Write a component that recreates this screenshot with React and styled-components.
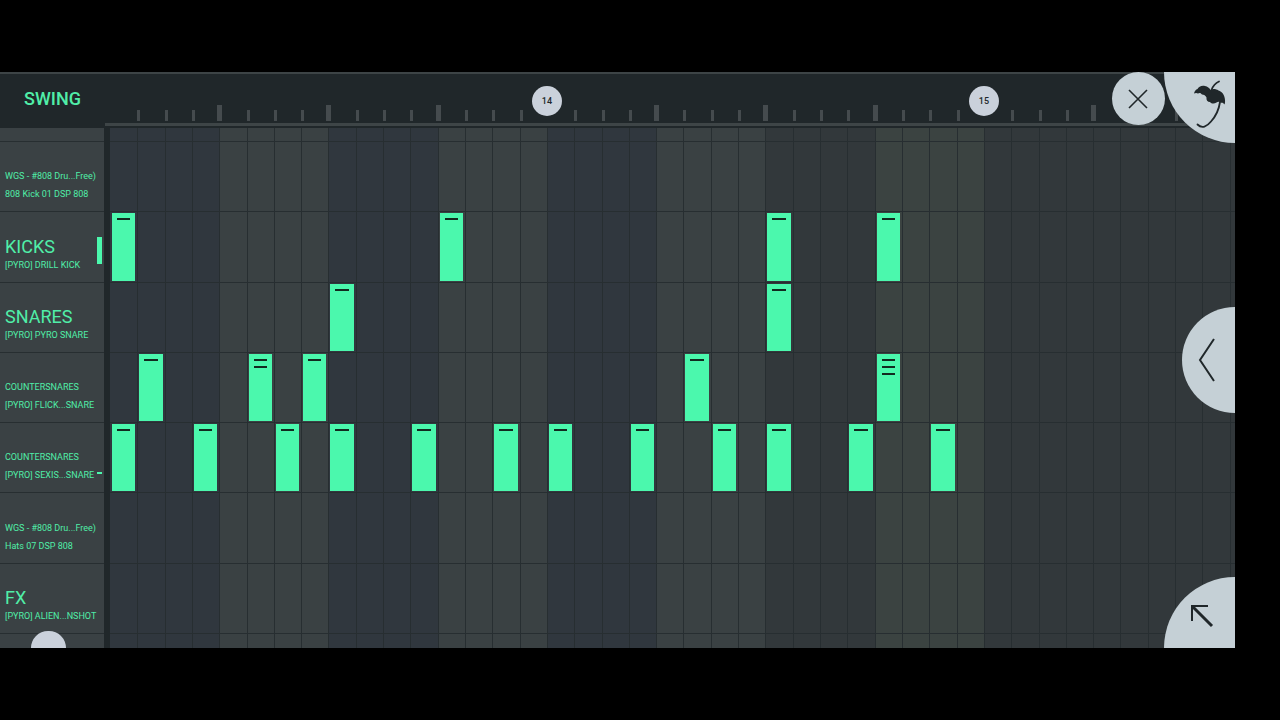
import React from "react";
import styled, { createGlobalStyle } from "styled-components";

const GlobalStyle = createGlobalStyle`
  * {
    box-sizing: border-box;
    margin: 0;
    padding: 0;
    font-family: Roboto, "Liberation Sans", sans-serif;
  }

  body {
    background: #000;
  }

  button {
    border: 0;
    background: none;
    cursor: pointer;
  }
`;

// 41 full steps and a sliver of the next one
const STEP_TRACKS = "repeat(41, minmax(0, 36fr)) minmax(0, 7fr)";
const ROW_TRACKS = "14px repeat(7, minmax(0, 1fr)) 14px";

const Page = styled.div`
  height: 100vh;
  min-height: 480px;
  padding: 72px 45px 72px 0;
`;

const Screen = styled.main`
  position: relative;
  display: flex;
  flex-direction: column;
  height: 100%;
  overflow: hidden;
  background: #20272a;
`;

const Header = styled.header`
  display: flex;
  height: 56px;
  border-top: 2px solid #3d4446;
`;

const SwingButton = styled.button`
  width: 105px;
  padding-bottom: 4px;
  color: #50eea8;
  font-size: 18px;
  font-weight: 500;
  line-height: 48px;
  text-align: center;
`;

const Ruler = styled.div`
  flex: 1;
  display: grid;
  grid-template-columns: ${STEP_TRACKS};
  align-items: end;
  margin-bottom: 2px;
  padding: 0 0 2px 5px;
  border-bottom: 3px solid #3e4547;
`;

const Tick = styled.span`
  grid-row: 1;
  grid-column: ${(props) => props.$step + 1};
  width: ${(props) => (props.$beat ? 5 : 3)}px;
  height: ${(props) => (props.$beat ? 16 : 11)}px;
  margin-left: ${(props) => (props.$beat ? -2 : 0)}px;
  background: #454b4e;
`;

const BarBadge = styled.span`
  grid-row: 1;
  grid-column: ${(props) => props.$step + 1};
  width: 30px;
  height: 30px;
  margin: 0 0 5px -15px;
  border-radius: 50%;
  background: #cad1db;
  color: #20272a;
  font-size: 9px;
  font-weight: 500;
  line-height: 30px;
  text-align: center;
`;

const Body = styled.div`
  flex: 1;
  display: flex;
  gap: 6px;
  min-height: 0;
`;

const Sidebar = styled.ul`
  display: grid;
  grid-template-rows: ${ROW_TRACKS};
  width: 104px;
  background: #3a4144;
  list-style: none;
`;

const ChannelItem = styled.li`
  border-bottom: 1px solid #272e31;
`;

const ChannelButton = styled.button`
  display: flex;
  align-items: flex-end;
  justify-content: space-between;
  width: 100%;
  height: 100%;
  padding: 0 2px 8px 5px;
  color: #50eea8;
  text-align: left;
  white-space: nowrap;
`;

const ChannelText = styled.span`
  width: 92px;
`;

const GroupName = styled.span`
  display: block;
  font-size: ${(props) => (props.$large ? 18 : 9)}px;
  line-height: 18px;
`;

const SampleName = styled.span`
  display: block;
  font-size: 9px;
  line-height: 18px;
`;

const Meter = styled.span`
  width: 5px;
  height: ${(props) => props.$level}px;
  margin-bottom: 10px;
  background: #4bf8ad;
`;

const Grid = styled.div`
  flex: 1;
  display: grid;
  grid-template-columns: ${STEP_TRACKS};
  grid-template-rows: ${ROW_TRACKS};
`;

const StepColumn = styled.span`
  grid-column: ${(props) => props.$step + 1};
  grid-row: 1 / -1;
  border-left: 1px solid #272e31;
  background: ${(props) => props.$color};

  &:first-child {
    border-left: 0;
  }
`;

const RowLine = styled.span`
  grid-column: 1 / -1;
  grid-row: ${(props) => props.$row + 1};
  border-bottom: 1px solid #272e31;
`;

const Note = styled.button`
  grid-column: ${(props) => props.$step + 1};
  grid-row: ${(props) => props.$row + 1};
  display: flex;
  flex-direction: column;
  gap: 5px;
  margin: 1px 2px 2px;
  padding: 5px;
  background: #4bf8ad;
`;

const Mark = styled.span`
  height: 2px;
  background: #122b20;
`;

const RoundButton = styled.button`
  position: absolute;
  display: flex;
  align-items: center;
  justify-content: center;
  background: #c5d0d6;
  color: #20272a;
`;

const CloseButton = styled(RoundButton)`
  top: 0;
  right: 70px;
  width: 53px;
  height: 53px;
  padding-right: 2px;
  border-radius: 50%;
`;

const LogoButton = styled(RoundButton)`
  top: 0;
  right: 0;
  width: 71px;
  height: 71px;
  padding: 0 0 7px 20px;
  border-radius: 0 0 0 100%;
`;

const DrawerButton = styled(RoundButton)`
  top: 50%;
  right: 0;
  width: 53px;
  height: 106px;
  margin-top: -53px;
  padding-right: 4px;
  border-radius: 106px 0 0 106px;
`;

const ExpandButton = styled(RoundButton)`
  right: 0;
  bottom: 0;
  width: 71px;
  height: 71px;
  padding: 6px 0 0 4px;
  border-radius: 100% 0 0 0;
`;

const ScrollKnob = styled(RoundButton)`
  bottom: 0;
  left: 31px;
  width: 35px;
  height: 17px;
  border-radius: 18px 18px 0 0;
  background: #cad1db;
`;

const BLUE = "#30373e";
const SLATE = "#3a4143";
const BEAT_COLORS = [BLUE, SLATE, BLUE, SLATE, BLUE, SLATE, "#32383b", "#3b4341"];
const TAIL_COLOR = "#32383b";

const STEPS = Array.from({ length: 42 }, (_, i) => i);
const BARS = { 16: 14, 32: 15 };
const HIDDEN_TICKS = [0, 37, 38];

const CHANNELS = [
  { group: "WGS - #808 Dru...Free)", sample: "808 Kick 01 DSP 808", notes: [] },
  {
    group: "KICKS",
    sample: "[PYRO] DRILL KICK",
    large: true,
    level: 27,
    notes: [[0], [12], [24], [28]],
  },
  { group: "SNARES", sample: "[PYRO] PYRO SNARE", large: true, notes: [[8], [24]] },
  {
    group: "COUNTERSNARES",
    sample: "[PYRO] FLICK...SNARE",
    notes: [[1], [5, 2], [7], [21], [28, 3]],
  },
  {
    group: "COUNTERSNARES",
    sample: "[PYRO] SEXIS...SNARE",
    level: 2,
    notes: [[0], [3], [6], [8], [11], [14], [16], [19], [22], [24], [27], [30]],
  },
  { group: "WGS - #808 Dru...Free)", sample: "Hats 07 DSP 808", notes: [] },
  { group: "FX", sample: "[PYRO] ALIEN...NSHOT", large: true, notes: [] },
];

function PalmIcon() {
  return (
    <svg width="34" height="50" viewBox="0 0 34 50" fill="none" aria-hidden="true">
      <path
        d="M26 2.500C22.500 4 20 7 18.500 11"
        stroke="currentColor"
        strokeWidth="1.800"
        strokeLinecap="round"
      />
      <path
        d="M1 14.500C1.500 12 3 10.500 4.500 10C5.500 7.500 9 6 12 7C14.500 7.500 16.500 9 17.500 11C20 9.500 23 10 25.500 11.500C29 12.500 31.500 16 31.800 19.500C32.200 22 32.200 24 31.500 25.500C30.500 24 29.500 23.500 28 23.800C26.500 22.500 25 22.500 23.500 23.500C21.500 25 18.500 25 17 23C14.500 23 13 21 13.500 18.500C12.500 16.500 11 15.500 9 15.500C8 14 6.500 13.500 5 14.500C3.500 13.500 2 14 1 14.500Z"
        fill="currentColor"
      />
      <path
        d="M27 23C26 30 23 37 18 42.500C14 47.500 9 50 4.500 45.500"
        stroke="currentColor"
        strokeWidth="1.800"
        strokeLinecap="round"
      />
    </svg>
  );
}

function Channel(props) {
  const { group, sample, large, level } = props;

  return (
    <ChannelItem>
      <ChannelButton type="button">
        <ChannelText>
          <GroupName $large={large}>{group}</GroupName>
          <SampleName>{sample}</SampleName>
        </ChannelText>
        {level && <Meter $level={level} />}
      </ChannelButton>
    </ChannelItem>
  );
}

function Timeline() {
  return (
    <Ruler>
      {STEPS.map((step) => {
        if (BARS[step]) {
          return (
            <BarBadge key={step} $step={step}>
              {BARS[step]}
            </BarBadge>
          );
        }
        if (HIDDEN_TICKS.includes(step)) return null;
        return <Tick key={step} $step={step} $beat={step % 4 === 0} />;
      })}
    </Ruler>
  );
}

function StepGrid() {
  return (
    <Grid>
      {STEPS.map((step) => (
        <StepColumn
          key={step}
          $step={step}
          $color={BEAT_COLORS[Math.floor(step / 4)] || TAIL_COLOR}
        />
      ))}
      {[0, 1, 2, 3, 4, 5, 6, 7].map((row) => (
        <RowLine key={row} $row={row} />
      ))}
      {CHANNELS.map((channel, index) =>
        channel.notes.map(([step, hits = 1]) => (
          <Note
            key={`${index}-${step}`}
            type="button"
            aria-label={`${channel.sample}, step ${step + 1}`}
            $row={index + 1}
            $step={step}
          >
            {Array.from({ length: hits }, (_, i) => (
              <Mark key={i} />
            ))}
          </Note>
        ))
      )}
    </Grid>
  );
}

function App() {
  return (
    <>
      <GlobalStyle />
      <Page>
        <Screen>
          <Header>
            <SwingButton type="button">SWING</SwingButton>
            <Timeline />
          </Header>
          <Body>
            <Sidebar>
              <ChannelItem aria-hidden="true" />
              {CHANNELS.map((channel, index) => (
                <Channel key={index} {...channel} />
              ))}
            </Sidebar>
            <StepGrid />
          </Body>
          <CloseButton type="button" aria-label="Close">
            <svg width="20" height="20" viewBox="0 0 20 20" stroke="currentColor" strokeWidth="1.600">
              <path d="M1 1L19 19M19 1L1 19" />
            </svg>
          </CloseButton>
          <LogoButton type="button" aria-label="Menu">
            <PalmIcon />
          </LogoButton>
          <DrawerButton type="button" aria-label="Open drawer">
            <svg width="18" height="46" viewBox="0 0 18 46" fill="none" stroke="currentColor" strokeWidth="2">
              <path d="M16 2L2 23L16 44" />
            </svg>
          </DrawerButton>
          <ExpandButton type="button" aria-label="Expand">
            <svg width="24" height="24" viewBox="0 0 24 24" fill="none" stroke="currentColor">
              <path d="M2 17V2H18" strokeWidth="2" />
              <path d="M2 2L22 22" strokeWidth="3" />
            </svg>
          </ExpandButton>
          <ScrollKnob type="button" aria-label="Scroll channels" />
        </Screen>
      </Page>
    </>
  );
}

export default App;
